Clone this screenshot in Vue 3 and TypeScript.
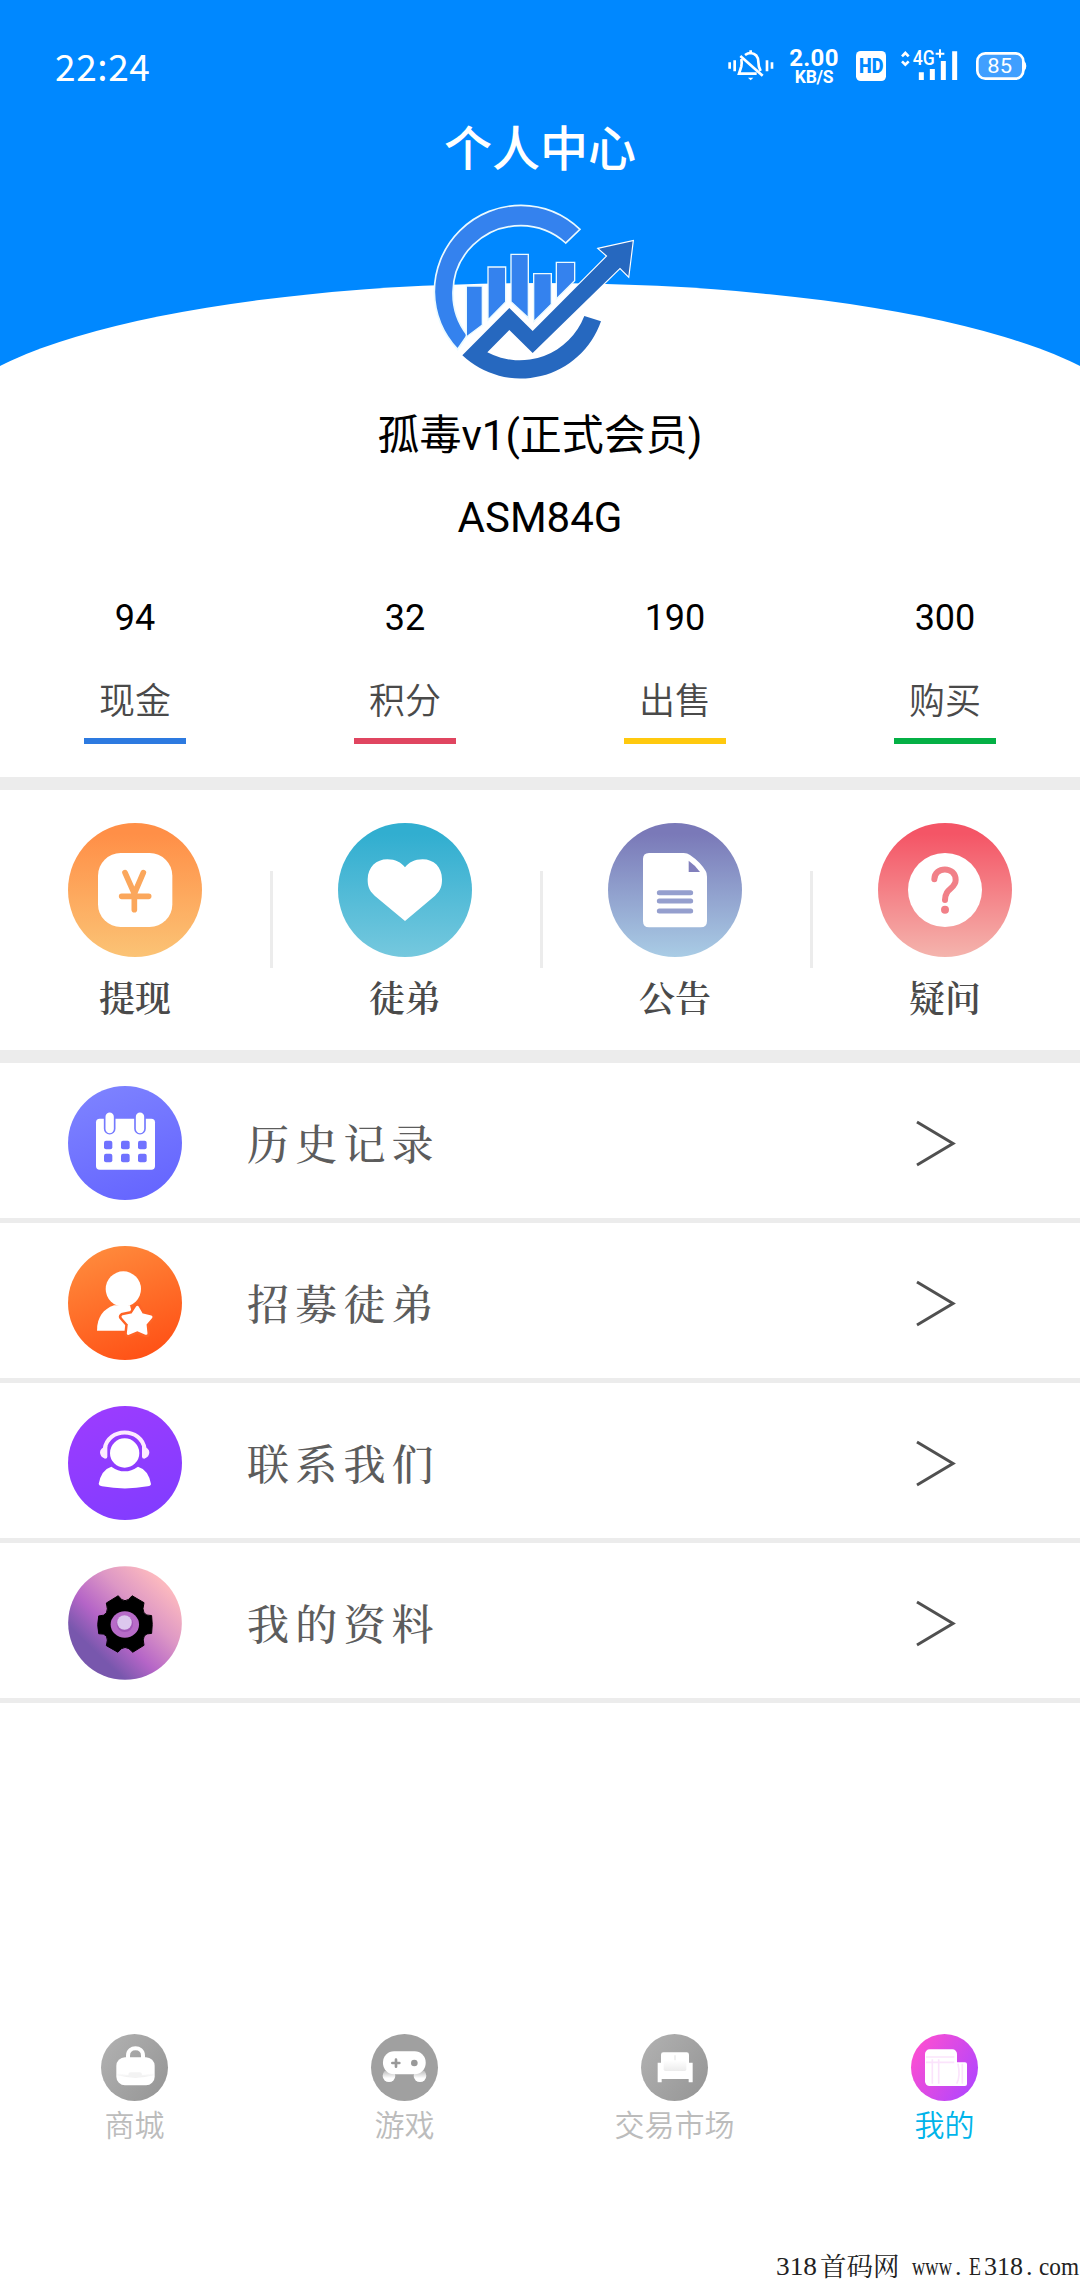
<script setup lang="ts">
interface Stat { value: string; label: string; color: string }
interface Entry { key: string; label: string }

const stats: Stat[] = [
  { value: '94', label: '现金', color: '#2d7ae0' },
  { value: '32', label: '积分', color: '#e04560' },
  { value: '190', label: '出售', color: '#ffc90e' },
  { value: '300', label: '购买', color: '#04b045' },
]
const actions: Entry[] = [
  { key: 'withdraw', label: '提现' },
  { key: 'heart', label: '徒弟' },
  { key: 'notice', label: '公告' },
  { key: 'question', label: '疑问' },
]
const rows: Entry[] = [
  { key: 'history', label: '历史记录' },
  { key: 'recruit', label: '招募徒弟' },
  { key: 'contact', label: '联系我们' },
  { key: 'profile', label: '我的资料' },
]
const tabs: Entry[] = [
  { key: 'mall', label: '商城' },
  { key: 'game', label: '游戏' },
  { key: 'market', label: '交易市场' },
  { key: 'mine', label: '我的' },
]
</script>

<template>
  <div class="page">
    <header class="header">
      <div class="status">
        <span class="time">22:24</span>
        <svg class="bell" viewBox="80 55 150 105" fill="none" stroke="#fff" stroke-width="8">
          <path d="M91 98v19M106 92v33M203 92v33M218 98v19" stroke-width="8" />
          <path d="M126 88Q128 99 126 110L119 132H172" />
          <path d="M137 76Q145 70 154 70Q176 72 177 96Q177 112 184 124" />
          <path d="M154 62v10M123 79L190 138" />
          <path d="M146 144h16l-8 8z" fill="#fff" stroke="none" />
        </svg>
        <span class="speed"><b>2.00</b><i>KB/S</i></span>
        <svg class="hd" viewBox="468 63 90 90">
          <rect x="468" y="63" width="90" height="90" rx="14" fill="#fff" />
          <text x="477" y="129" textLength="73" lengthAdjust="spacingAndGlyphs">HD</text>
        </svg>
        <svg class="signal" viewBox="600 55 180 105">
          <path d="M606 80L616 70L626 80M606 95L616 105L626 95" fill="none" stroke="#fff" stroke-width="8" />
          <text x="638" y="107" class="net" textLength="66" lengthAdjust="spacingAndGlyphs">4G</text>
          <path d="M720 59v25M707 72h26" stroke="#fff" stroke-width="6" />
          <path d="M664 128v23M697 118v33M730 94v57M764 65v86" stroke="#fff" stroke-width="15" stroke-linecap="butt" />
        </svg>
        <svg class="battery" viewBox="825 60 156 96">
          <rect x="832" y="70" width="138" height="76" rx="24" fill="#409fff" stroke="#fff" stroke-width="8" />
          <path d="M972 93q7 4 7 15t-7 15z" fill="#fff" />
          <text x="862" y="129" class="level" textLength="74" lengthAdjust="spacingAndGlyphs">85</text>
        </svg>
      </div>
      <h1 class="title">个人中心</h1>
      <svg class="logo" viewBox="90 305 630 540">
        <path d="M540 387A260 260 0 0 0 363 315A260 260 0 0 0 103 574A260 260 0 0 0 173 747L202 705A204 204 0 0 1 159 574A204 200 0 0 1 363 376A204 204 0 0 1 497 428Z" fill="#3482ee" stroke="#eafaff" stroke-width="5" />
        <g fill="#3482ee" stroke="#eafaff" stroke-width="4">
          <path d="M199 557H247V674L199 710Z" />
          <path d="M264 500H317V605L264 659Z" />
          <path d="M333 462H385V652L333 604Z" />
          <path d="M401 520H454V612L401 664Z" />
          <path d="M469 486H524V541L469 596Z" />
        </g>
        <path d="M187 765L328 623L398 692L622 467L597 445L698 423L685 527L660 502L398 758L328 689L262 756A208 208 0 0 0 553 647L603 663A255 255 0 0 1 187 765Z" fill="#2668bf" stroke="#fff" stroke-width="7" paint-order="stroke" />
      </svg>
    </header>

    <section class="identity">
      <div class="name">孤毒v1(正式会员)</div>
      <div class="code">ASM84G</div>
    </section>

    <section class="stats">
      <div v-for="s in stats" :key="s.label" class="stat">
        <span class="num">{{ s.value }}</span>
        <span class="lab">{{ s.label }}</span>
        <span class="bar" :style="{ background: s.color }"></span>
      </div>
    </section>

    <section class="actions">
      <div v-for="a in actions" :key="a.key" class="action">
        <svg v-if="a.key === 'withdraw'" viewBox="84 68 402 402">
          <defs><linearGradient id="ga" x1="0" y1="0" x2="0" y2="1"><stop offset=".08" stop-color="#ff8f47" /><stop offset="1" stop-color="#fbc375" /></linearGradient></defs>
          <circle cx="285" cy="269" r="201" fill="url(#ga)" />
          <rect x="174" y="158" width="223" height="222" rx="68" fill="#fff" />
          <path d="M255 217L283 280L310 217M245 288H326M283 280V328" fill="none" stroke="#fba75c" stroke-width="17" stroke-linecap="round" stroke-linejoin="round" />
        </svg>
        <svg v-else-if="a.key === 'heart'" viewBox="895 68 402 402">
          <defs><linearGradient id="gb" x1="0" y1="0" x2="0" y2="1"><stop offset=".08" stop-color="#31aed0" /><stop offset="1" stop-color="#75c8de" /></linearGradient></defs>
          <circle cx="1096" cy="269" r="201" fill="url(#gb)" />
          <path d="M1096 362L1005 286C987 270 984 256 984 237C985 200 1010 177 1043 177C1068 177 1084 186 1096 201C1108 186 1124 177 1149 177C1182 177 1207 200 1207 237C1207 256 1204 270 1186 286Z" fill="#fff" />
        </svg>
        <svg v-else-if="a.key === 'notice'" viewBox="144 68 402 402">
          <defs><linearGradient id="gc" x1="0" y1="0" x2="0" y2="1"><stop offset=".08" stop-color="#7a79b8" /><stop offset="1" stop-color="#a9cce5" /></linearGradient></defs>
          <circle cx="345" cy="269" r="201" fill="url(#gc)" />
          <path d="M267 158H371Q382 158 390 164Q421 185 437 212Q441 218 441 229V362Q441 381 422 381H267Q249 381 249 362V176Q249 158 267 158Z" fill="#fff" />
          <path d="M386 181Q405 194 420 215H386Z" fill="#817fbc" />
          <path d="M298 277H392M298 302H392M298 332H392" stroke="#959fce" stroke-width="15" stroke-linecap="round" />
        </svg>
        <svg v-else viewBox="955 68 402 402">
          <defs><linearGradient id="gd" x1="0" y1="0" x2="0" y2="1"><stop offset=".08" stop-color="#f45566" /><stop offset="1" stop-color="#f4b4ad" /></linearGradient></defs>
          <circle cx="1156" cy="269" r="201" fill="url(#gd)" />
          <circle cx="1156" cy="269" r="111" fill="#fff" />
          <path d="M1124 237C1124 197 1188 197 1188 239C1188 266 1156 262 1156 299" fill="none" stroke="#f18088" stroke-width="18" stroke-linecap="round" />
          <circle cx="1156" cy="328" r="12" fill="#f18088" />
        </svg>
        <span>{{ a.label }}</span>
      </div>
    </section>

    <section class="list">
      <div v-for="r in rows" :key="r.key" class="row">
        <svg v-if="r.key === 'history'" class="ricon" viewBox="84 79 342 342">
          <defs><linearGradient id="ra" x1=".3" y1="0" x2=".7" y2="1"><stop offset="0" stop-color="#7d82ff" /><stop offset="1" stop-color="#6565ff" /></linearGradient></defs>
          <circle cx="255" cy="250" r="171" fill="url(#ra)" />
          <rect x="168" y="177" width="177" height="153" rx="11" fill="#fff" />
          <path d="M209 174V207M300 174V207" stroke="#757aff" stroke-width="35" stroke-linecap="round" />
          <path d="M209 171V208M300 171V208" stroke="#fff" stroke-width="25" stroke-linecap="round" />
          <g fill="#7072ff">
            <rect x="192" y="243" width="25" height="26" rx="6" /><rect x="243" y="243" width="26" height="26" rx="6" /><rect x="294" y="243" width="26" height="26" rx="6" />
            <rect x="192" y="282" width="25" height="26" rx="6" /><rect x="243" y="282" width="26" height="26" rx="6" /><rect x="294" y="282" width="26" height="26" rx="6" />
          </g>
        </svg>
        <svg v-else-if="r.key === 'recruit'" class="ricon" viewBox="84 556 342 342">
          <defs><linearGradient id="rb" x1=".3" y1="0" x2=".7" y2="1"><stop offset="0" stop-color="#ff8a3c" /><stop offset="1" stop-color="#ff5015" /></linearGradient></defs>
          <circle cx="255" cy="727" r="171" fill="url(#rb)" />
          <path d="M171 810C171 770 190 745 222 734H270L290 810Z" fill="#fff" />
          <ellipse cx="250" cy="685" rx="53" ry="53" fill="#fff" />
          <path d="M292 740L305 762L333 769L315 790L318 818L292 807L265 818L268 790L249 768L278 762Z" fill="#ff6426" stroke="#ff6426" stroke-width="24" stroke-linejoin="round" />
          <path d="M292 740L305 762L333 769L315 790L318 818L292 807L265 818L268 790L249 768L278 762Z" fill="#fff" stroke="#fff" stroke-width="9" stroke-linejoin="round" />
        </svg>
        <svg v-else-if="r.key === 'contact'" class="ricon" viewBox="84 79 342 342">
          <defs><linearGradient id="rc" x1=".3" y1="0" x2=".7" y2="1"><stop offset="0" stop-color="#9b3cff" /><stop offset="1" stop-color="#823cff" /></linearGradient></defs>
          <circle cx="255" cy="250" r="171" fill="url(#rc)" />
          <circle cx="254" cy="220" r="44" fill="#fff" />
          <path d="M214 261Q254 289 294 261Q325 270 333 313Q333 318 323 320Q255 333 186 320Q177 318 176 313Q184 270 214 261Z" fill="#fff" />
          <path d="M194 208C204 142 304 142 314 208" fill="none" stroke="#fdeaff" stroke-width="12" />
          <path d="M202 199V231Q202 237 195 237Q180 232 180 218Q180 205 202 199ZM306 199V231Q306 237 313 237Q328 232 328 218Q328 205 306 199Z" fill="#fdeaff" />
        </svg>
        <svg v-else class="ricon" viewBox="84 558 345 345">
          <defs>
            <linearGradient id="rd" x1=".08" y1=".82" x2=".78" y2=".1"><stop offset=".16" stop-color="#7857ad" /><stop offset=".4" stop-color="#b565c7" /><stop offset=".7" stop-color="#dd97c5" /><stop offset="1" stop-color="#fbb8bf" /></linearGradient>
          </defs>
          <circle cx="256.500" cy="730.500" r="172" fill="url(#rd)" />
          <path d="M236 648Q256 678 278 648L314 669Q302 710 337 708Q341 735 337 762Q304 760 314 798L280 819Q256 790 235 819L200 799Q212 760 177 763Q171 735 177 709Q212 710 200 670Z" fill="#000" stroke="#000" stroke-width="3" stroke-linejoin="round" />
          <ellipse cx="256" cy="735" rx="43" ry="40" fill="#b76bc8" />
          <circle cx="256" cy="733" r="25" fill="#a257b8" />
          <circle cx="255" cy="729" r="22" fill="#dcc8ee" />
        </svg>
        <span class="rlabel">{{ r.label }}</span>
        <svg class="arrow" viewBox="0 0 44 50" fill="none" stroke="#505050" stroke-width="3"><path d="M3 4L39 25.500L3 47" /></svg>
      </div>
    </section>

    <nav class="tabs">
      <div v-for="t in tabs" :key="t.key" class="tab" :class="{ active: t.key === 'mine' }">
        <svg v-if="t.key === 'mall'" viewBox="123 71 201 201">
          <defs>
            <linearGradient id="ta" x1="0" y1="0" x2="1" y2=".7"><stop offset="0" stop-color="#b2b2b2" /><stop offset="1" stop-color="#989898" /></linearGradient>
            <linearGradient id="tb" x1="0" y1="0" x2="0" y2="1"><stop offset="0" stop-color="#fff" /><stop offset="1" stop-color="#ededed" /></linearGradient>
          </defs>
          <circle cx="223.500" cy="171.500" r="100.500" fill="url(#ta)" />
          <path d="M204 145V136C204 106 249 106 249 136V145" fill="none" stroke="#fff" stroke-width="12" />
          <rect x="169" y="141" width="115" height="84" rx="26" fill="#fff" />
          <path d="M172 188Q226 202 281 188V195Q226 209 172 195Z" fill="url(#tb)" />
          <rect x="205" y="186" width="41" height="14" rx="7" fill="#f3f3f3" />
        </svg>
        <svg v-else-if="t.key === 'game'" viewBox="933 71 201 201">
          <defs><linearGradient id="tc" x1="0" y1="0" x2="0" y2="1"><stop offset="0" stop-color="#b0b0b0" /><stop offset=".7" stop-color="#fff" /></linearGradient></defs>
          <circle cx="1033.500" cy="171.500" r="100.500" fill="#a0a0a0" />
          <circle cx="987" cy="196" r="19" fill="url(#tc)" /><circle cx="1080" cy="196" r="19" fill="url(#tc)" />
          <rect x="969" y="123" width="128" height="69" rx="33" fill="#fff" />
          <path d="M1008 148V169M997 158H1018" stroke="#999" stroke-width="8" stroke-linecap="round" />
          <circle cx="1063" cy="158" r="10" fill="#999" />
        </svg>
        <svg v-else-if="t.key === 'market'" viewBox="183 71 201 201">
          <defs><linearGradient id="te" x1="0" y1="0" x2="0" y2="1"><stop offset="0" stop-color="#fff" /><stop offset="1" stop-color="#ececec" /></linearGradient></defs>
          <circle cx="283.500" cy="171.500" r="100.500" fill="url(#ta)" />
          <path d="M250 126H320Q327 126 327 133V157H338V216H326V206H245V216H233V157H243V133Q243 126 250 126Z" fill="#fff" />
          <rect x="251" y="150" width="68" height="32" rx="5" fill="url(#te)" />
          <path d="M285 135V150" stroke="#ededed" stroke-width="5" />
        </svg>
        <svg v-else viewBox="993 71 201 201">
          <defs><linearGradient id="tf" x1="0" y1=".2" x2="1" y2=".8"><stop offset="0" stop-color="#ff4fd0" /><stop offset="1" stop-color="#b045ff" /></linearGradient></defs>
          <circle cx="1093.500" cy="171.500" r="100.500" fill="url(#tf)" />
          <rect x="1114" y="156" width="47" height="71" rx="6" fill="#fff" />
          <rect x="1035" y="117" width="96" height="110" rx="14" fill="#fff" />
          <path d="M1038 140H1123M1038 156H1123M1057 147V220M1076 147V220M1134 160Q1142 200 1130 220M1147 160V220" fill="none" stroke="#fbe3fc" stroke-width="5" />
        </svg>
        <span>{{ t.label }}</span>
      </div>
    </nav>

    <footer class="mark">
      <svg width="306" height="34" viewBox="774 2246 306 34">
        <text x="776" y="2275" textLength="41" lengthAdjust="spacingAndGlyphs">318</text>
        <text x="820" y="2276" class="cjk">首码网</text>
        <text x="912" y="2275" textLength="40" lengthAdjust="spacingAndGlyphs">www</text>
        <text x="955" y="2275">.</text>
        <text x="969" y="2275" textLength="12" lengthAdjust="spacingAndGlyphs">E</text>
        <text x="984" y="2275" textLength="39" lengthAdjust="spacingAndGlyphs">318</text>
        <text x="1026" y="2275">.</text>
        <text x="1039" y="2275" textLength="40" lengthAdjust="spacingAndGlyphs">com</text>
      </svg>
    </footer>
  </div>
</template>

<style>
body { margin: 0; background: #fff; }
</style>

<style scoped>
.page {
  width: 1080px;
  height: 2280px;
  display: flex;
  flex-direction: column;
  background: #fff;
  overflow: hidden;
  font-family: Roboto, "Noto Sans CJK SC", sans-serif;
}
svg { display: block; flex: none; overflow: visible; }
.header {
  position: relative;
  height: 390px;
  flex: none;
  overflow: hidden;
  background: linear-gradient(#0088ff 367px, #fff 367px);
}
.header::before {
  content: "";
  position: absolute;
  left: -60px;
  top: 283px;
  width: 1200px;
  height: 294px;
  border-radius: 50%;
  background: #fff;
}
.status {
  position: relative;
  box-sizing: border-box;
  height: 109px;
  padding: 18px 53px 0 55px;
  display: flex;
  align-items: flex-start;
  color: #fff;
}
.time {
  margin-right: auto;
  margin-top: 19px;
  font: 37px/56px "Noto Sans CJK SC", sans-serif;
  letter-spacing: .6px;
}
.bell { width: 50px; height: 35px; margin-top: 30px; }
.speed {
  width: 50px;
  margin: 28px 0 0 13px;
  display: flex;
  flex-direction: column;
  align-items: center;
}
.speed b { font: 700 24px/24px Roboto, sans-serif; letter-spacing: .3px; }
.speed i { font: 700 17.500px/18px Roboto, sans-serif; margin-top: -2px; letter-spacing: -.3px; }
.hd { width: 30px; height: 30px; margin: 33px 0 0 17px; }
.hd text { font: 900 60px Roboto, sans-serif; fill: #0088ff; }
.signal { width: 60px; height: 35px; margin: 30px 0 0 14px; }
.net { font: 500 60px Roboto, sans-serif; fill: #fff; }
.battery { width: 52px; height: 32px; margin: 32px 0 0 15px; }
.level { font: 62px Roboto, sans-serif; fill: #fff; }
.title {
  position: relative;
  margin: 0;
  font: 500 48px/72px "Noto Sans CJK SC", sans-serif;
  color: #fff;
  text-align: center;
}
.logo { position: relative; width: 210px; height: 180px; margin: 21px 0 0 430px; }
.identity { height: 187px; flex: none; text-align: center; color: #000; }
.name { font-size: 42px; line-height: 60px; padding-top: 16px; }
.code { font-size: 42px; line-height: 60px; margin-top: 22px; }
.stats {
  box-sizing: border-box;
  height: 213px;
  flex: none;
  display: flex;
  border-bottom: 13px solid #ececec;
}
.stat { width: 270px; display: flex; flex-direction: column; align-items: center; }
.num { font-size: 36px; line-height: 50px; margin-top: 16px; color: #000; }
.lab { font-size: 36px; line-height: 54px; margin-top: 32px; color: #4a4a4a; font-weight: 350; }
.bar { width: 102px; height: 6px; margin-top: 9px; }
.actions {
  box-sizing: border-box;
  height: 273px;
  flex: none;
  display: flex;
  border-bottom: 13px solid #ececec;
  background: linear-gradient(#ececec, #ececec) 270px 81px / 3px 97px no-repeat,
    linear-gradient(#ececec, #ececec) 540px 81px / 3px 97px no-repeat,
    linear-gradient(#ececec, #ececec) 810px 81px / 3px 97px no-repeat;
}
.action { width: 270px; display: flex; flex-direction: column; align-items: center; }
.action svg { width: 134px; height: 134px; margin-top: 33px; }
.action span {
  margin-top: 13px;
  font: 600 36px/54px "Noto Serif CJK SC", "Noto Sans CJK SC", serif;
  color: #4a4a4a;
}
.row {
  box-sizing: border-box;
  height: 160px;
  padding: 5px 122px 0 68px;
  display: flex;
  align-items: center;
  border-bottom: 5px solid #ececec;
}
.ricon { width: 114px; height: 114px; }
.rlabel {
  margin-left: 65px;
  margin-top: -3px;
  font: 500 42px/60px "Noto Serif CJK SC", "Noto Sans CJK SC", serif;
  letter-spacing: 6.200px;
  color: #5c5c5c;
}
.arrow { width: 44px; height: 50px; margin-left: auto; }
.tabs { display: flex; margin-top: 331px; }
.tab { width: 269px; padding-right: 1px; display: flex; flex-direction: column; align-items: center; color: #bcbcbc; }
.tab svg { width: 67px; height: 67px; }
.tab span { font: 350 30px/44px "Noto Sans CJK SC", sans-serif; margin-top: 0; }
.tab.active { color: #00b4ea; }
.mark { margin-top: auto; display: flex; justify-content: flex-end; }
.mark text { font: 26px "Liberation Serif", serif; fill: #222; }
.mark text.cjk { font: 400 26.500px "Noto Serif CJK SC", "Noto Sans CJK SC", serif; }
</style>
